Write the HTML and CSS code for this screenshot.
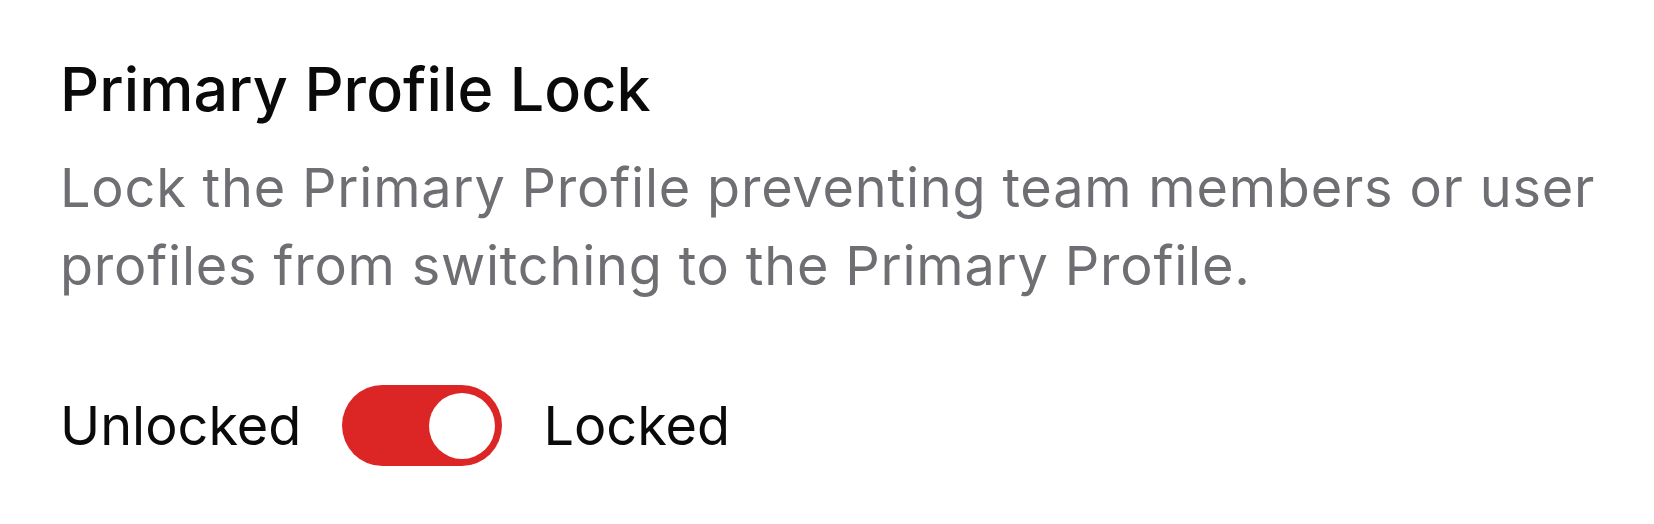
FILE: index.html
```html
<!DOCTYPE html>
<html lang="en">
<head>
<meta charset="utf-8">
<title>Primary Profile Lock</title>
<link rel="stylesheet" href="styles.css">
</head>
<body>
<section class="setting">
  <h2 class="setting-title">Primary Profile Lock</h2>
  <p class="setting-desc">Lock the Primary Profile preventing team members or user profiles from switching to the Primary Profile.</p>
  <div class="toggle-row">
    <span class="toggle-label">Unlocked</span>
    <button class="toggle is-on" type="button" role="switch" aria-checked="true"><span class="toggle-knob"></span></button>
    <span class="toggle-label">Locked</span>
  </div>
</section>
</body>
</html>
```

FILE: styles.css
```css
html, body {
  margin: 0;
  padding: 0;
  background: #ffffff;
}
body {
  font-family: Inter, "Noto Sans", "Liberation Sans", sans-serif;
  color: #111111;
}
.setting {
  padding: 53px 20px 0 60px;
}
.setting-title {
  margin: 0;
  font-size: 61px;
  line-height: 72px;
  font-weight: 500;
  letter-spacing: 0.1px;
  color: #0a0a0a;
}
.setting-desc {
  margin: 24px 0 0 0;
  max-width: 1550px;
  font-size: 54px;
  line-height: 78px;
  font-weight: 400;
  letter-spacing: 0.8px;
  color: #6e6e73;
}
.toggle-row {
  margin-top: 80px;
  display: flex;
  align-items: center;
  gap: 41px;
}
.toggle-label {
  font-size: 54px;
  line-height: 78px;
  letter-spacing: 0;
  color: #0a0a0a;
}
.toggle {
  width: 160px;
  height: 81px;
  border: none;
  border-radius: 41px;
  padding: 0 7px;
  background: #dc2626;
  display: flex;
  align-items: center;
  justify-content: flex-end;
  cursor: pointer;
}
.toggle-knob {
  width: 66px;
  height: 66px;
  border-radius: 50%;
  background: #ffffff;
  display: block;
}
```
